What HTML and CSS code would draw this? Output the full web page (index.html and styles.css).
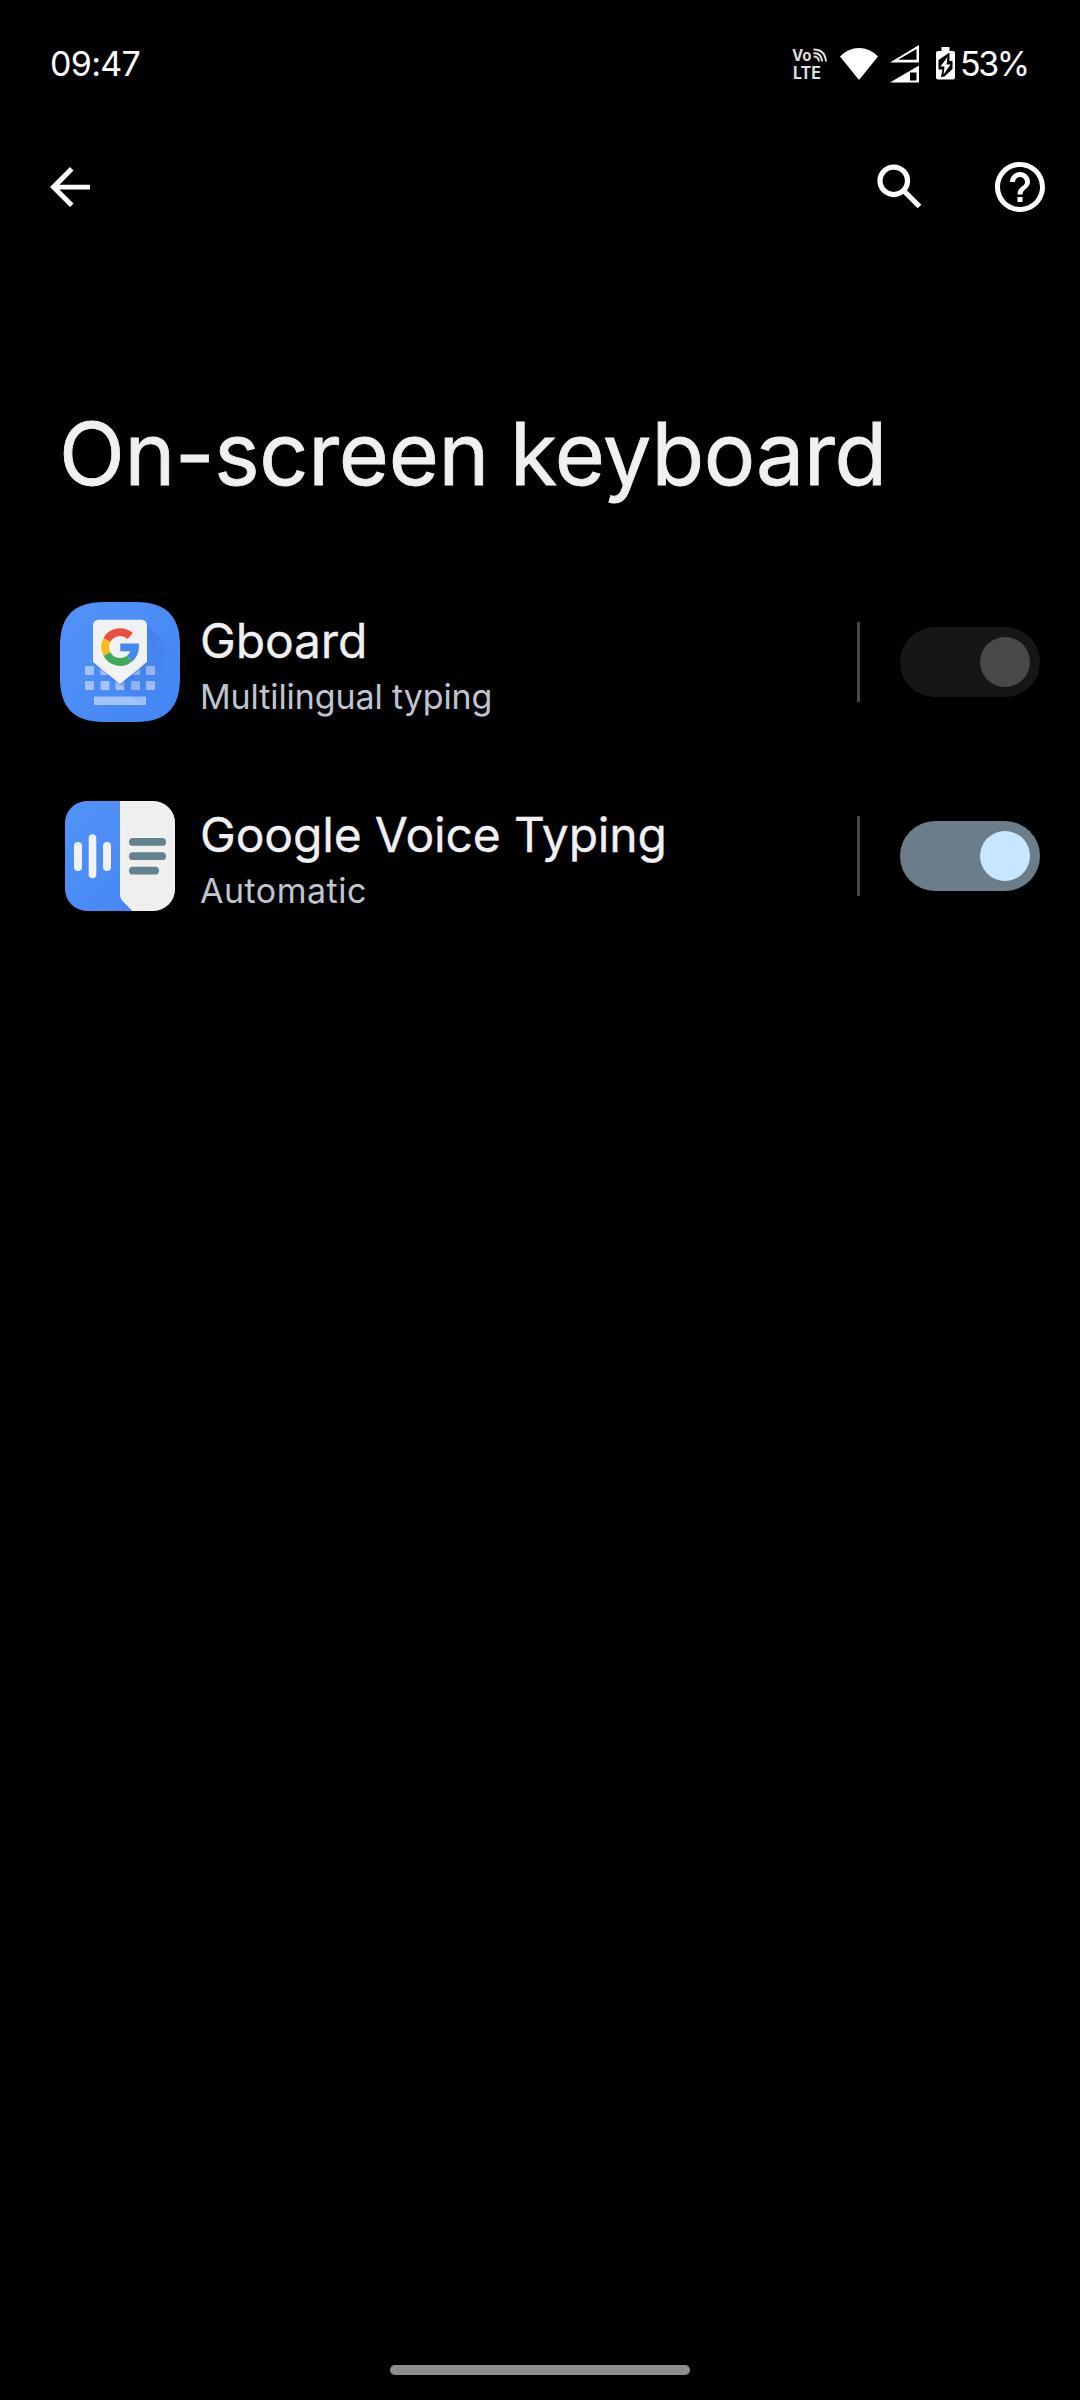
FILE: index.html
```html
<!DOCTYPE html>
<html lang="en">
    <head>
        <meta charset="utf-8">
        <title>On-screen keyboard</title>
        <link rel="stylesheet" href="styles.css">
    </head>
    <body>
        <div class="status">
            <span class="time">09:47</span>
            <div class="status-icons">
                <svg class="volte" width="40" height="46" viewBox="0 -6 40 46">
                    <text x="0" y="14" font-size="16" textLength="19.500" lengthAdjust="spacingAndGlyphs">Vo</text>
                    <text x="1" y="31.500" font-size="17" textLength="28" lengthAdjust="spacingAndGlyphs">LTE</text>
                    <path d="M21.500 9.500q5 0 5.500 5M21.500 6q8 0 8.700 8.500M21.500 2.500q11.500 0 12.500 12"/>
                </svg>
                <svg class="wifi" width="38" height="32" viewBox="0 0 38 32">
                    <path d="M0 8.500Q8 0 19 0T38 8.500L19 32z"/>
                </svg>
                <svg class="signal" width="30" height="38" viewBox="0 0 30 38">
                    <path fill-rule="evenodd" d="M0 17.500L29 0v17.500zM8 14.800h18.500V4z"/>
                    <path fill-rule="evenodd" d="M0 37.500L29 20.500v17zM20 27.500v8h6.500v-8z"/>
                </svg>
                <svg class="battery" width="19" height="33" viewBox="0 0 19 33">
                    <path d="M5.500 0h8v4H17q2 0 2 2v24.500q0 2-2 2H2q-2 0-2-2V6q0-2 2-2h3.500z"/>
                    <path class="bolt" d="M13.500 5.500L2.500 13v9.500h4L5 30l3.500-.5L16.500 22v-8h-3z"/>
                    <path d="M11.500 10L4.500 19.500h4L7.500 27.500l7-10H10.500z"/>
                </svg>
                <span class="percent">53%</span>
            </div>
        </div>
        <div class="toolbar">
            <svg width="60" height="60" viewBox="0 0 24 24">
                <path d="M20 11.050H7.800l5.600-5.640L12 4l-8 8 8 8 1.400-1.400-5.600-5.650H20z"/>
            </svg>
            <div class="actions">
                <svg class="search" width="60" height="60" viewBox="0 0 24 24">
                    <circle cx="9.500" cy="9.500" r="5.500"/>
                    <path d="M13.500 13.500l6.300 6.300"/>
                </svg>
                <svg width="60" height="60" viewBox="0 0 24 24">
                    <path d="M11 18h2v-2h-2v2zm1-16C6.480 2 2 6.480 2 12s4.480 10 10 10 10-4.480 10-10S17.520 2 12 2zm0 18c-4.410 0-8-3.590-8-8s3.590-8 8-8 8 3.590 8 8-3.590 8-8 8zm0-14c-2.210 0-4 1.790-4 4h2c0-1.100.9-2 2-2s2 .9 2 2c0 2-3 1.750-3 5h2c0-2.250 3-2.500 3-5 0-2.210-1.790-4-4-4z"/>
                </svg>
            </div>
        </div>
        <h1>On-screen keyboard</h1>
        <div class="list">
            <div class="row">
                <div class="icon">
                    <svg width="120" height="120" viewBox="0 0 120 120">
                        <defs>
                            <linearGradient id="blue" x1="0" y1="0" x2="1" y2="1">
                                <stop offset="0" stop-color="#5293f8"/>
                                <stop offset="1" stop-color="#4385f3"/>
                            </linearGradient>
                            <linearGradient id="shade" x1="0" y1="0" x2="1" y2="1">
                                <stop offset="0.200" stop-color="#3a70d8" stop-opacity="0.450"/>
                                <stop offset="0.600" stop-color="#3a70d8" stop-opacity="0"/>
                            </linearGradient>
                            <clipPath id="squircle">
                                <path d="M44 0H76C106 0 120 14 120 44V76C120 106 106 120 76 120H44C14 120 0 106 0 76V44C0 14 14 0 44 0z"/>
                            </clipPath>
                        </defs>
                        <g clip-path="url(#squircle)">
                            <path fill="url(#blue)" d="M0 0h120v120H0z"/>
                            <g fill="#a4c3fa">
                                <rect x="25" y="64" width="9" height="9" rx="1"/>
                                <rect x="40.500" y="64" width="9" height="9" rx="1"/>
                                <rect x="71" y="64" width="9" height="9" rx="1"/>
                                <rect x="86" y="64" width="9" height="9" rx="1"/>
                                <rect x="25" y="79" width="9" height="9" rx="1"/>
                                <rect x="40.500" y="79" width="9" height="9" rx="1"/>
                                <rect x="55.500" y="79" width="9" height="9" rx="1"/>
                                <rect x="71" y="79" width="9" height="9" rx="1"/>
                                <rect x="86" y="79" width="9" height="9" rx="1"/>
                                <rect x="34" y="94.500" width="52" height="8.500" rx="1"/>
                            </g>
                            <path fill="url(#shade)" d="M85 20l50 50v50H98L60 82z"/>
                            <path fill="#3b78e0" opacity="0.400" d="M32.500 24v37L60 83.500 87.500 61V24z"/>
                            <path fill="#f1f1f1" d="M39 17.700h42q6 0 6 6V60L60 82 33 60V23.700q0-6 6-6z"/>
                        </g>
                        <g fill="none" stroke-width="7.800">
                            <path stroke="#ea4e40" d="M70.200 34A15 15 0 0 0 46.900 38"/>
                            <path stroke="#fbbc15" d="M46.900 38A15 15 0 0 0 46.900 52"/>
                            <path stroke="#3eaa58" d="M46.900 52A15 15 0 0 0 69.500 56.700"/>
                            <path stroke="#4586f1" d="M69.500 56.700A15 15 0 0 0 75 45.300H60.300"/>
                        </g>
                    </svg>
                </div>
                <div class="info">
                    <p class="name">Gboard</p>
                    <p class="sub">Multilingual typing</p>
                </div>
                <div class="divider"></div>
                <div class="switch disabled"><div class="thumb"></div></div>
            </div>
            <div class="row">
                <div class="icon">
                    <svg width="110" height="110" viewBox="0 0 110 110">
                        <defs>
                            <clipPath id="rounded"><rect width="110" height="110" rx="22"/></clipPath>
                        </defs>
                        <g clip-path="url(#rounded)">
                            <path fill="url(#blue)" d="M0 0h110v110H0z"/>
                            <path fill="#efefef" d="M55 0h55v110H67.500L57.500 100Q55 97.500 55 94z"/>
                        </g>
                        <g fill="#f1f1f1">
                            <rect x="9" y="41" width="8" height="29" rx="4"/>
                            <rect x="23.700" y="33.300" width="7.600" height="44" rx="3.800"/>
                            <rect x="38" y="41" width="8" height="29" rx="4"/>
                        </g>
                        <g fill="#64818e">
                            <rect x="64" y="37" width="37" height="7.800" rx="3.900"/>
                            <rect x="64" y="51.300" width="37" height="7.800" rx="3.900"/>
                            <rect x="64" y="65.800" width="30" height="7.800" rx="3.900"/>
                        </g>
                    </svg>
                </div>
                <div class="info">
                    <p class="name">Google Voice Typing</p>
                    <p class="sub auto">Automatic</p>
                </div>
                <div class="divider"></div>
                <div class="switch"><div class="thumb"></div></div>
            </div>
        </div>
        <div class="nav"></div>
    </body>
</html>
```

FILE: styles.css
```css
*{
    margin: 0;
    padding: 0;
    box-sizing: border-box;
}
body{
    display: flex;
    flex-direction: column;
    height: 2400px;
    background-color: #000;
    color: #f0f0f3;
    font-family: Inter, "Noto Sans", sans-serif;
    white-space: nowrap;
}
svg{
    display: block;
    flex: none;
    fill: #fff;
}
.status{
    display: flex;
    justify-content: space-between;
    align-items: center;
    height: 124px;
    padding: 3px 52px 0 50px;
    color: #fff;
    font-size: 34px;
    line-height: 42px;
}
.time{
    letter-spacing: -0.7px;
}
.status-icons{
    display: flex;
    align-items: center;
}
.volte{
    fill: #ddd;
    font-weight: 700;
}
.volte path{
    fill: none;
    stroke: #ddd;
    stroke-width: 2;
}
.wifi{
    margin-left: 8px;
}
.signal{
    margin-left: 12px;
}
.battery{
    margin-left: 16px;
}
.battery .bolt{
    fill: #000;
}
.percent{
    width: 68px;
    margin-left: 5px;
    letter-spacing: -2.5px;
}
.toolbar{
    display: flex;
    justify-content: space-between;
    align-items: center;
    height: 124px;
    padding: 2px 30px 0 40px;
}
.actions{
    display: flex;
    gap: 60px;
}
.search{
    fill: none;
    stroke: #fff;
    stroke-width: 2.1;
}
h1{
    height: 317px;
    padding: 156px 0 0 59px;
    font-size: 86px;
    font-weight: 400;
    line-height: 100px;
    letter-spacing: -0.3px;
    word-spacing: -3px;
    -webkit-text-stroke: 0.8px #f0f0f3;
}
.row{
    display: flex;
    align-items: center;
    height: 194px;
    padding: 0 40px 0 60px;
}
.icon{
    display: flex;
    justify-content: center;
    width: 120px;
}
.info{
    flex: 1;
    padding: 5px 0 0 20px;
}
.name{
    font-size: 48px;
    line-height: 58px;
    letter-spacing: -0.15px;
    -webkit-text-stroke: 0.3px #f0f0f3;
}
.sub{
    margin-top: 6px;
    color: #bfc4cf;
    font-size: 34px;
    line-height: 42px;
    letter-spacing: -0.1px;
}
.auto{
    letter-spacing: 0.5px;
}
.divider{
    width: 3px;
    height: 80px;
    margin-right: 40px;
    background-color: #474747;
}
.switch{
    display: flex;
    justify-content: flex-end;
    width: 140px;
    height: 70px;
    padding: 10px;
    border-radius: 35px;
    background-color: #6b7d8a;
}
.thumb{
    width: 50px;
    height: 50px;
    border-radius: 50%;
    background-color: #c7e6ff;
}
.disabled{
    background-color: #161616;
}
.disabled .thumb{
    background-color: #48494b;
}
.nav{
    width: 300px;
    height: 10px;
    margin: auto auto 25px;
    border-radius: 5px;
    background-color: #8d8d8d;
}
```
